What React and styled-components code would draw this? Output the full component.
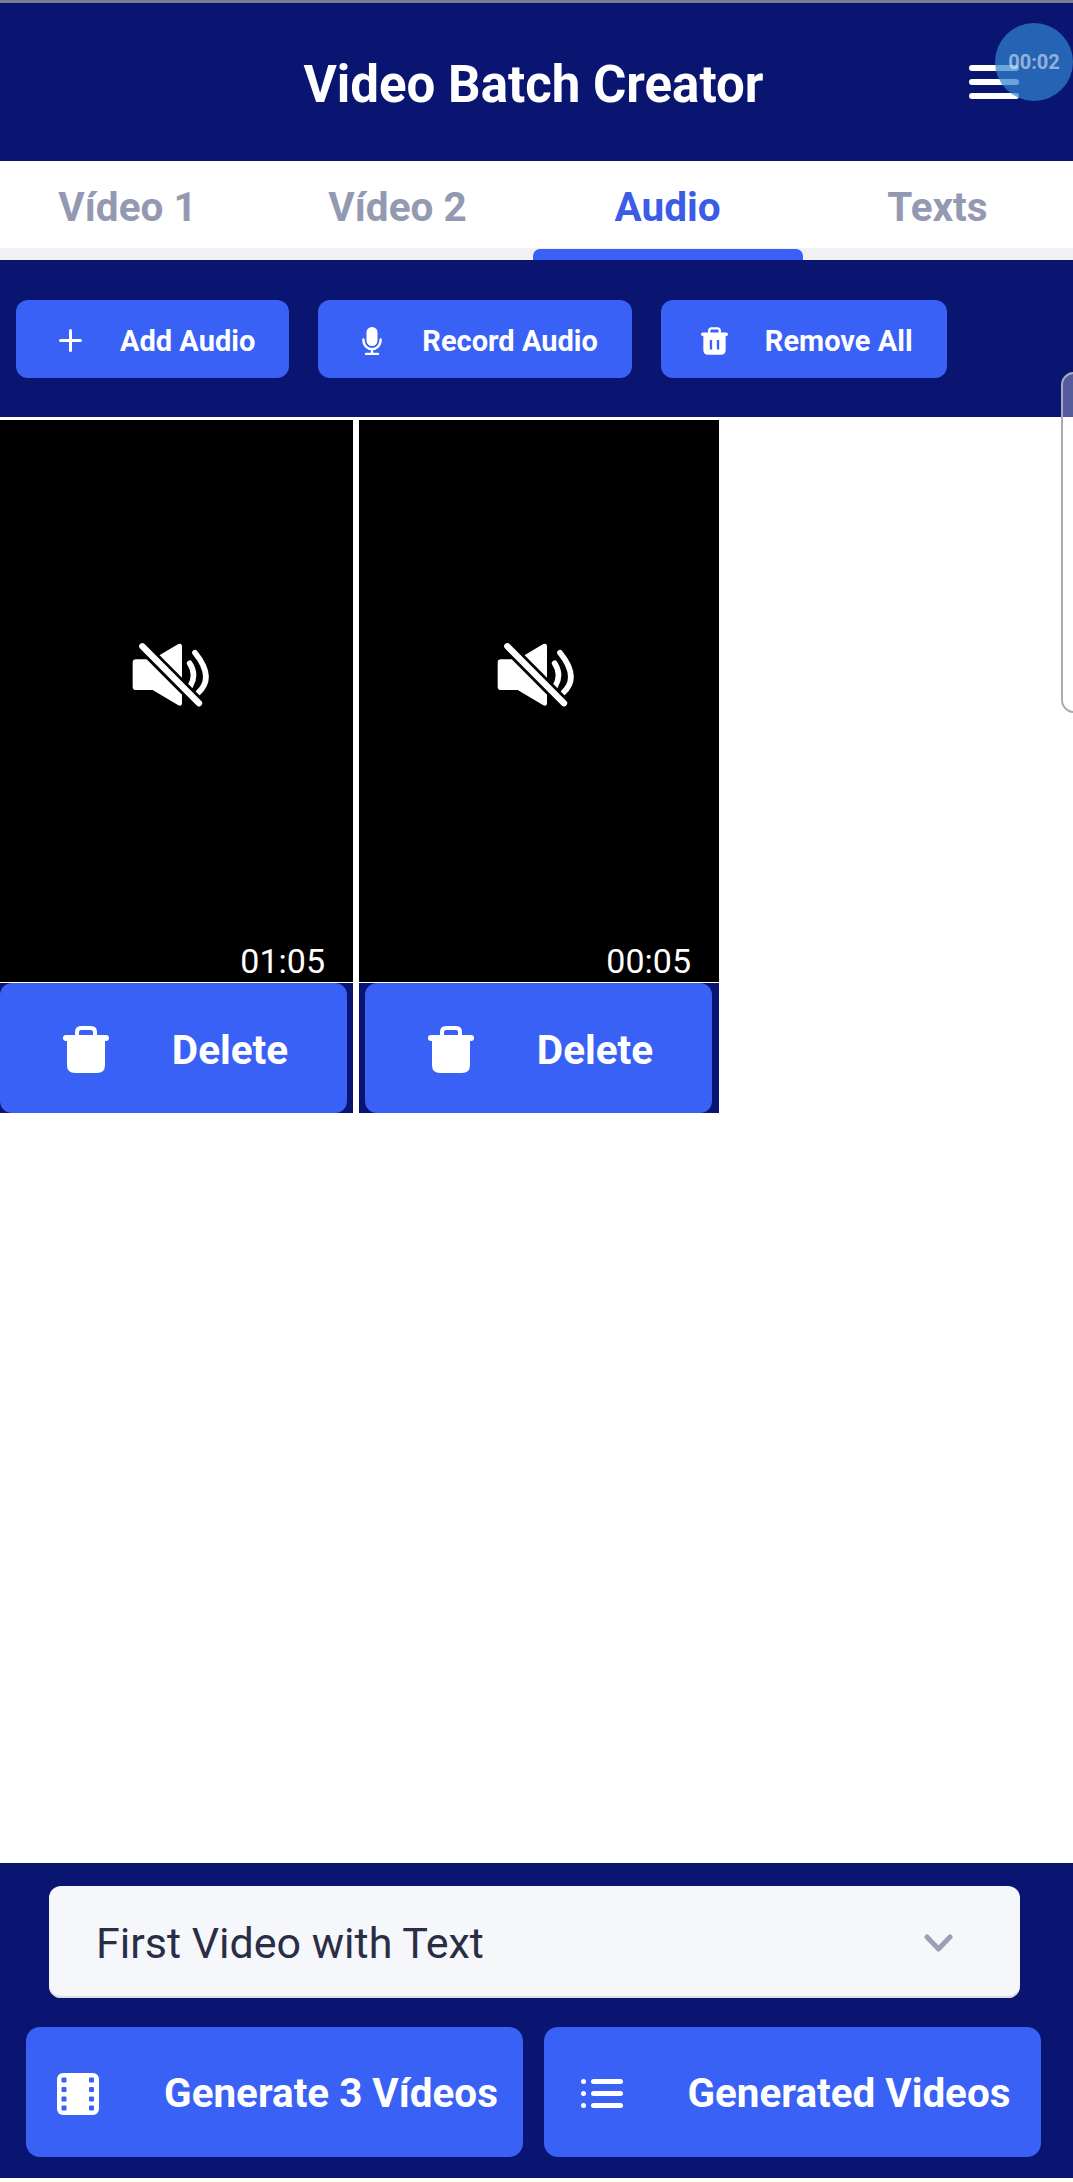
import React from "react";
import styled, { createGlobalStyle } from "styled-components";

const NAVY = "#0a1572";
const BLUE = "#3a61f5";

const Global = createGlobalStyle`
  html, body { margin: 0; padding: 0; background: #fff; }
  * { box-sizing: border-box; }
  body { font-family: Roboto, "Liberation Sans", sans-serif; overflow: hidden; }
`;

const Page = styled.div`
  position: relative;
  width: 1073px;
  height: 2182px;
  display: flex;
  flex-direction: column;
  overflow: hidden;
  background: #fff;
  border-top: 3px solid #7b7e8c;
`;

const Header = styled.header`
  height: 158px;
  flex: none;
  display: grid;
  grid-template-columns: 1fr auto 1fr;
  align-items: center;
  padding: 0 54px 0 48px;
  background: ${NAVY};
`;

const Title = styled.h1`
  grid-column: 2;
  margin: 5px 0 0;
  font-size: 51px;
  font-weight: 700;
  color: #fff;
  white-space: nowrap;
`;

const MenuButton = styled.div`
  grid-column: 3;
  justify-self: end;
  width: 50px;
  display: flex;
  flex-direction: column;
  gap: 8px;
`;

const MenuBar = styled.span`
  height: 6px;
  border-radius: 3px;
  background: #fff;
`;

const TimerBubble = styled.div`
  position: absolute;
  top: 20px;
  left: 995px;
  width: 78px;
  height: 78px;
  border-radius: 50%;
  display: flex;
  align-items: center;
  justify-content: center;
  background: rgba(48, 132, 205, 0.72);
  color: rgba(255, 255, 255, 0.5);
  font-size: 20px;
  font-weight: 700;
`;

const SideHandle = styled.div`
  position: absolute;
  top: 369px;
  left: 1061px;
  width: 30px;
  height: 341px;
  border: 2.5px solid #a9abb6;
  border-radius: 13px;
  background: rgba(255, 255, 255, 0.3);
`;

const TabBar = styled.nav`
  flex: none;
  display: grid;
  grid-template-columns: repeat(4, 270px);
  height: 99px;
  margin-left: -8px;
  width: 1081px;
  background: #fff;
  border-bottom: 12px solid #f1f0f4;
`;

const Tab = styled.div`
  position: relative;
  display: flex;
  align-items: center;
  justify-content: center;
  padding: 4px 0 0 1px;
  font-size: 40.5px;
  font-weight: 700;
  color: ${(p) => (p.$active ? "#3a5ce6" : "#9399b1")};

  ${(p) =>
    p.$active &&
    `&::after {
      content: "";
      position: absolute;
      left: 1px;
      right: -1px;
      bottom: -12px;
      height: 11px;
      border-radius: 7px 7px 0 0;
      background: ${BLUE};
    }`}
`;

const Toolbar = styled.div`
  flex: none;
  display: flex;
  gap: 29px;
  height: 157px;
  padding: 40px 16px 39px;
  background: ${NAVY};
`;

const ToolButton = styled.button`
  height: 78px;
  display: flex;
  align-items: center;
  gap: 32px;
  padding: 3px 34px 0 36px;
  border: 0;
  border-radius: 12px;
  background: ${BLUE};
  color: #fff;
  font-family: inherit;
  font-size: 29px;
  font-weight: 700;
  white-space: nowrap;
`;

const IconBox = styled.span`
  flex: none;
  width: ${(p) => p.$size}px;
  display: flex;
  justify-content: center;
`;

const Gallery = styled.main`
  flex: 1;
  display: flex;
  align-items: flex-start;
  gap: 6px;
  margin: 3px 0 0 -6px;
`;

const Tile = styled.article`
  width: 360px;
  background: ${NAVY};

  &:first-child {
    width: 359px;
  }
`;

const Preview = styled.div`
  position: relative;
  height: 563px;
  display: flex;
  align-items: center;
  justify-content: center;
  padding: 0 6px 52px 0;
  background: #000;
  border-bottom: 1px solid #fff;
`;

const Duration = styled.span`
  position: absolute;
  right: 28px;
  bottom: 1px;
  font-size: 34px;
  color: #fff;
`;

const DeleteButton = styled.button`
  display: flex;
  align-items: center;
  justify-content: center;
  gap: 62px;
  width: 347px;
  height: 130px;
  margin: 0 0 0 6px;
  padding: 3px 0 0 3px;
  border: 0;
  border-radius: 12px;
  background: ${BLUE};
  color: #fff;
  font-family: inherit;
  font-size: 40.5px;
  font-weight: 700;
`;

const Footer = styled.footer`
  flex: none;
  display: flex;
  flex-direction: column;
  gap: 29px;
  padding: 23px 0 21px;
  background: ${NAVY};
  margin-bottom: 4px;
`;

const Picker = styled.div`
  height: 112px;
  margin: 0 53px 0 49px;
  padding: 2px 67px 0 47px;
  display: flex;
  align-items: center;
  justify-content: space-between;
  border-radius: 12px;
  background: #f6f7fb;
  box-shadow: inset 0 -2px 0 #dcdee6;
  color: #2a2e45;
  font-size: 43px;
`;

const ActionRow = styled.div`
  display: grid;
  grid-template-columns: 497px 497px;
  gap: 21px;
  padding: 0 32px 0 26px;
`;

const ActionButton = styled.button`
  height: 130px;
  display: flex;
  align-items: center;
  justify-content: center;
  gap: 59px;
  padding: 3px 0 0;
  border: 0;
  border-radius: 14px;
  background: ${BLUE};
  color: #fff;
  font-family: inherit;
  font-size: 40.4px;
  font-weight: 700;
  white-space: nowrap;
`;

const Plus = () => (
  <svg width="23" height="23" viewBox="0 0 23 23" fill="none" stroke="#fff" strokeWidth="3" strokeLinecap="round">
    <path d="M11.5 1.5v20M1.5 11.5h20" />
  </svg>
);

const Mic = () => (
  <svg width="20" height="28" viewBox="0 0 20 28" fill="none" stroke="#fff" strokeWidth="2.4" strokeLinecap="round">
    <rect x="4.5" y="0" width="11" height="19" rx="5.5" fill="#fff" stroke="none" />
    <path d="M1.4 12.5v1a8.6 8.6 0 0 0 17.2 0v-1M10 22v5M4 27h12" />
  </svg>
);

const Trash = ({ width, height, slots }) => (
  <svg width={width} height={height} viewBox="0 0 46 47" fill="#fff">
    <path d="M14 11V6q0-4 4-4h10q4 0 4 4v5" fill="none" stroke="#fff" strokeWidth="4" />
    <rect x="0" y="9" width="46" height="6" rx="3" />
    <path d="M4 13h38v26q0 8-8 8H12q-8 0-8-8z" />
    {slots && <path d="M15 22h4v16h-4zM27 22h4v16h-4z" fill={BLUE} />}
  </svg>
);

const Muted = () => (
  <svg width="80" height="70" viewBox="90 120 240 210" fill="none" strokeLinecap="round">
    <path
      fill="#fff"
      d="M105 178h50l77-46q11-4 11 8v168q0 12-11 8l-77-46h-50q-10 0-10-10v-72q0-10 10-10z"
    />
    <path stroke="#fff" strokeWidth="17" d="M266 190q22 34 2 68M282 158q60 74 10 120" />
    <path stroke="#000" strokeWidth="36" strokeLinecap="butt" d="M122 137l174 175" />
    <path stroke="#fff" strokeWidth="19" d="M124 139l170 171" />
  </svg>
);

const Chevron = () => (
  <svg width="29" height="18" viewBox="0 0 29 18" fill="none" stroke="#9aa0b6" strokeWidth="5" strokeLinecap="round" strokeLinejoin="round">
    <path d="M3 3l11.500 12L26 3" />
  </svg>
);

const Film = () => (
  <svg width="42" height="42" viewBox="0 0 42 42">
    <rect width="42" height="42" rx="6" fill="#fff" />
    {[4.5, 14, 23.5, 32.5].flatMap((y) =>
      [4.5, 32].map((x) => <rect key={`${x}-${y}`} x={x} y={y} width="5" height="5" rx="1" fill={BLUE} />)
    )}
  </svg>
);

const ListIcon = () => (
  <svg width="42" height="29" viewBox="0 0 42 29" fill="#fff">
    {[2.5, 14.5, 26.5].map((y) => (
      <g key={y}>
        <circle cx="2.5" cy={y} r="2.5" />
        <rect x="10" y={y - 2.5} width="32" height="5" rx="2.5" />
      </g>
    ))}
  </svg>
);

const clips = ["01:05", "00:05"];

export default function App() {
  return (
    <Page>
      <Global />
      <Header>
        <Title>Video Batch Creator</Title>
        <MenuButton>
          <MenuBar />
          <MenuBar />
          <MenuBar />
        </MenuButton>
      </Header>
      <TabBar>
        <Tab>Vídeo 1</Tab>
        <Tab>Vídeo 2</Tab>
        <Tab $active>Audio</Tab>
        <Tab>Texts</Tab>
      </TabBar>
      <Toolbar>
        <ToolButton>
          <IconBox $size={36}><Plus /></IconBox>
          Add Audio
        </ToolButton>
        <ToolButton>
          <IconBox $size={36}><Mic /></IconBox>
          Record Audio
        </ToolButton>
        <ToolButton>
          <IconBox $size={36}><Trash width={27} height={28} slots /></IconBox>
          Remove All
        </ToolButton>
      </Toolbar>
      <Gallery>
        {clips.map((time) => (
          <Tile key={time}>
            <Preview>
              <Muted />
              <Duration>{time}</Duration>
            </Preview>
            <DeleteButton>
              <IconBox $size={48}><Trash width={46} height={47} /></IconBox>
              Delete
            </DeleteButton>
          </Tile>
        ))}
      </Gallery>
      <Footer>
        <Picker>
          First Video with Text
          <Chevron />
        </Picker>
        <ActionRow>
          <ActionButton>
            <IconBox $size={54}><Film /></IconBox>
            Generate 3 Vídeos
          </ActionButton>
          <ActionButton>
            <IconBox $size={54}><ListIcon /></IconBox>
            Generated Videos
          </ActionButton>
        </ActionRow>
      </Footer>
      <SideHandle />
      <TimerBubble>00:02</TimerBubble>
    </Page>
  );
}
